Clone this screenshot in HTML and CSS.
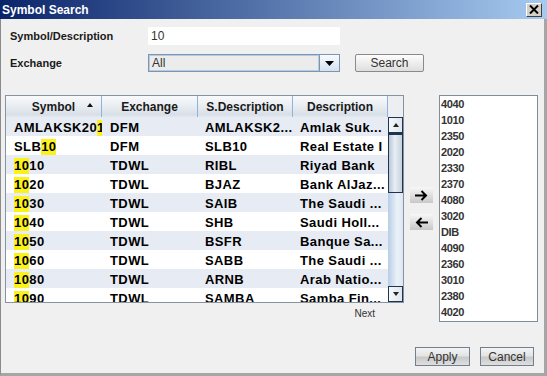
FILE: index.html
```html
<!DOCTYPE html>
<html>
<head>
<meta charset="utf-8">
<link rel="stylesheet" href="styles.css">
</head>
<body>
<div class="window">
  <div class="titlebar">
    <span class="title">Symbol Search</span>
    <div class="close"><svg width="10" height="9" viewBox="0 0 10 9"><path d="M1 0.5 L9 8.5 M9 0.5 L1 8.5" stroke="#000" stroke-width="2"/></svg></div>
  </div>
  <div class="content">
    <div class="form">
      <div class="lbl">Symbol/Description</div>
      <div class="input">10</div>
      <div></div>
      <div class="lbl">Exchange</div>
      <div class="combo">
        <span class="combo-text">All</span>
        <span class="combo-btn"><svg width="9" height="5" viewBox="0 0 9 5"><path d="M0 0 H9 L4.5 5 Z" fill="#000"/></svg></span>
      </div>
      <div class="btn">Search</div>
    </div>
    <div class="main">
      <div class="left">
        <div class="table">
          <div class="thead">
            <div class="th c1">Symbol<span class="sort"></span></div>
            <div class="th c2">Exchange</div>
            <div class="th c3">S.Description</div>
            <div class="th c4">Description</div>
            <div class="th corner"></div>
          </div>
          <div class="tbody">
            <div class="rows">
              <div class="row odd"><div class="td c1">AMLAKSK20<span class="hl">1</span></div><div class="td c2">DFM</div><div class="td c3">AMLAKSK2...</div><div class="td c4">Amlak Suk...</div></div>
              <div class="row"><div class="td c1">SLB<span class="hl">10</span></div><div class="td c2">DFM</div><div class="td c3">SLB10</div><div class="td c4">Real Estate I</div></div>
              <div class="row odd"><div class="td c1"><span class="hl">10</span>10</div><div class="td c2">TDWL</div><div class="td c3">RIBL</div><div class="td c4">Riyad Bank</div></div>
              <div class="row"><div class="td c1"><span class="hl">10</span>20</div><div class="td c2">TDWL</div><div class="td c3">BJAZ</div><div class="td c4">Bank AlJaz...</div></div>
              <div class="row odd"><div class="td c1"><span class="hl">10</span>30</div><div class="td c2">TDWL</div><div class="td c3">SAIB</div><div class="td c4">The Saudi ...</div></div>
              <div class="row"><div class="td c1"><span class="hl">10</span>40</div><div class="td c2">TDWL</div><div class="td c3">SHB</div><div class="td c4">Saudi Holl...</div></div>
              <div class="row odd"><div class="td c1"><span class="hl">10</span>50</div><div class="td c2">TDWL</div><div class="td c3">BSFR</div><div class="td c4">Banque Sa...</div></div>
              <div class="row"><div class="td c1"><span class="hl">10</span>60</div><div class="td c2">TDWL</div><div class="td c3">SABB</div><div class="td c4">The Saudi ...</div></div>
              <div class="row odd"><div class="td c1"><span class="hl">10</span>80</div><div class="td c2">TDWL</div><div class="td c3">ARNB</div><div class="td c4">Arab Natio...</div></div>
              <div class="row"><div class="td c1"><span class="hl">10</span>90</div><div class="td c2">TDWL</div><div class="td c3">SAMBA</div><div class="td c4">Samba Fin...</div></div>
            </div>
            <div class="vscroll">
              <div class="sb-btn"><span class="tri-up"></span></div>
              <div class="thumb"></div>
              <div class="track"></div>
              <div class="sb-btn"><span class="tri-down"></span></div>
            </div>
          </div>
        </div>
        <div class="next">Next</div>
      </div>
      <div class="movers">
        <div class="mv"><svg width="13" height="11" viewBox="0 0 13 11"><path d="M0 5.5 H11 M6.5 1 L11 5.5 L6.5 10" stroke="#000" stroke-width="2" fill="none"/></svg></div>
        <div class="mv"><svg width="13" height="11" viewBox="0 0 13 11"><path d="M13 5.5 H2 M6.5 1 L2 5.5 L6.5 10" stroke="#000" stroke-width="2" fill="none"/></svg></div>
      </div>
      <div class="list">
        <div>4040</div><div>1010</div><div>2350</div><div>2020</div><div>2330</div><div>2370</div><div>4080</div>
        <div>3020</div><div>DIB</div><div>4090</div><div>2360</div><div>3010</div><div>2380</div><div>4020</div>
      </div>
    </div>
    <div class="footer">
      <div class="fbtn apply">Apply</div>
      <div class="fbtn cancel">Cancel</div>
    </div>
  </div>
</div>
</body>
</html>
```
FILE: styles.css
```css
* { box-sizing: border-box; }
html, body { margin: 0; padding: 0; }
body {
  width: 547px; height: 376px; overflow: hidden;
  font-family: "Liberation Sans", Arial, sans-serif;
  background: #f0f0f0;
}
.window { width: 547px; height: 376px; display: flex; flex-direction: column; }
.titlebar {
  height: 19px; flex: none;
  background: linear-gradient(to right, #0a246a, #a6caf0);
  display: flex; align-items: center; justify-content: space-between;
  padding: 0 5px 0 2px;
}
.title { color: #fff; font-weight: bold; font-size: 12px; }
.close {
  width: 16px; height: 14px; background: #d4d0c8;
  border: 1px solid; border-color: #fff #404040 #404040 #fff;
  display: flex; align-items: center; justify-content: center;
}
.content {
  flex: 1; display: flex; flex-direction: column;
  border-left: 1px solid #8c8c8c;
  border-right: 3px solid #a6a6a6;
  border-bottom: 3px solid #a6a6a6;
  background: #f0f0f0;
}
.form {
  display: grid;
  grid-template-columns: 123px 192px 69px;
  grid-auto-rows: 18px;
  column-gap: 15px; row-gap: 9px;
  margin: 8px 0 0 9px;
  align-items: center;
}
.lbl { font-size: 11px; font-weight: bold; color: #1a1a1a; white-space: nowrap; }
.input {
  height: 18px; background: #fff; font-size: 12px; color: #333;
  padding-left: 3px; line-height: 18px;
}
.combo {
  height: 18px; display: flex;
  border: 1px solid #7a96b4;
  background: #ececec;
}
.combo-text {
  flex: 1; font-size: 12px; color: #333; padding-left: 2px; line-height: 15px;
  border: 1px solid #b9cadb;
}
.combo-btn {
  width: 20px; flex: none;
  border-left: 1px solid #7a96b4;
  background: linear-gradient(#f8fbff, #d5e1ed);
  display: flex; align-items: center; justify-content: center;
}
.btn {
  height: 18px; border: 1px solid #8a8a8a; border-radius: 2px;
  background: linear-gradient(#fdfdfd, #dedede);
  font-size: 12px; color: #333;
  display: flex; align-items: center; justify-content: center;
}
.main { display: flex; margin-top: 23px; margin-left: 4px; }
.left { width: 399px; display: flex; flex-direction: column; }
.table {
  height: 208px; border: 1px solid #87939f; background: #fff;
  display: flex; flex-direction: column; overflow: hidden;
}
.thead { height: 21px; display: flex; flex: none; }
.th {
  position: relative;
  font-size: 12px; font-weight: bold; color: #1a1a1a;
  display: flex; align-items: center; justify-content: center;
  background: linear-gradient(#f8fafc 0%, #eaeef2 45%, #d8dfe7 90%, #e4e9ee 100%);
  border-right: 1px solid #8eb4dc;
}
.thead .c1 { width: 96px; }
.thead .c2 { width: 96px; }
.thead .c3 { width: 95px; }
.thead .c4 { width: 95px; }
.thead .corner { width: 15px; border-right: none; background: #eceef1; }
.sort {
  position: absolute; right: 8px; top: 7px;
  width: 0; height: 0;
  border-left: 3px solid transparent; border-right: 3px solid transparent;
  border-bottom: 4px solid #111;
}
.tbody { flex: 1; display: flex; overflow: hidden; }
.rows { flex: 1; overflow: hidden; }
.row { display: flex; height: 19px; align-items: center; padding-top: 2px; }
.row.odd { background: #e6ebf4; }
.td {
  font-size: 13px; font-weight: bold; letter-spacing: 0.4px; color: #000;
  white-space: nowrap; overflow: hidden;
}
.row .c1 { width: 96px; padding-left: 8px; }
.row .c2 { width: 96px; padding-left: 8px; }
.row .c3 { width: 95px; padding-left: 7px; }
.row .c4 { width: 95px; padding-left: 7px; }
.hl { background: #fbf21c; display: inline-block; line-height: 16px; }
.vscroll { width: 15px; flex: none; display: flex; flex-direction: column; }
.sb-btn {
  height: 16px; flex: none; border: 1px solid #1e3552;
  background: linear-gradient(to right, #f6f8fb, #dfe6ee);
  display: flex; align-items: center; justify-content: center;
}
.tri-up {
  width: 0; height: 0;
  border-left: 3px solid transparent; border-right: 3px solid transparent;
  border-bottom: 4px solid #222;
}
.tri-down {
  width: 0; height: 0;
  border-left: 3px solid transparent; border-right: 3px solid transparent;
  border-top: 4px solid #222;
}
.thumb {
  height: 60px; flex: none;
  border: 1px solid #1e3552; border-top-width: 2px;
  background: linear-gradient(to right, #b9c7d6, #e8eef4 45%, #c6d2de);
}
.track { flex: 1; background: linear-gradient(to right, #b8cde6, #eaf1f8 60%, #dde7f1); }
.next {
  font-size: 10px; color: #333; align-self: flex-end;
  margin-right: 29px; margin-top: 5px;
}
.movers {
  width: 35px; height: 227px; flex: none;
  display: flex; flex-direction: column; justify-content: center;
  gap: 11px; padding-left: 6px;
}
.mv {
  width: 23px; height: 16px;
  background: linear-gradient(#f7f7f7, #c8c8c8);
  display: flex; align-items: center; justify-content: center;
}
.list {
  width: 99px; height: 227px; border: 1px solid #7f8d99; background: #fff;
  padding-left: 1px;
}
.list div {
  font-size: 11px; font-weight: bold; color: #333; letter-spacing: -0.4px;
  line-height: 16px; height: 16px;
}
.footer {
  margin-top: auto; margin-bottom: 7px;
  display: flex; justify-content: flex-end; gap: 10px;
  padding-right: 10px;
}
.fbtn {
  height: 19px; border: 1px solid #70808f;
  background: linear-gradient(#f4f4f4, #e4e4e4 45%, #c9c9c9 55%, #dfdfdf);
  font-size: 12px; color: #333;
  display: flex; align-items: center; justify-content: center;
}
.apply { width: 55px; }
.cancel { width: 54px; }
```
